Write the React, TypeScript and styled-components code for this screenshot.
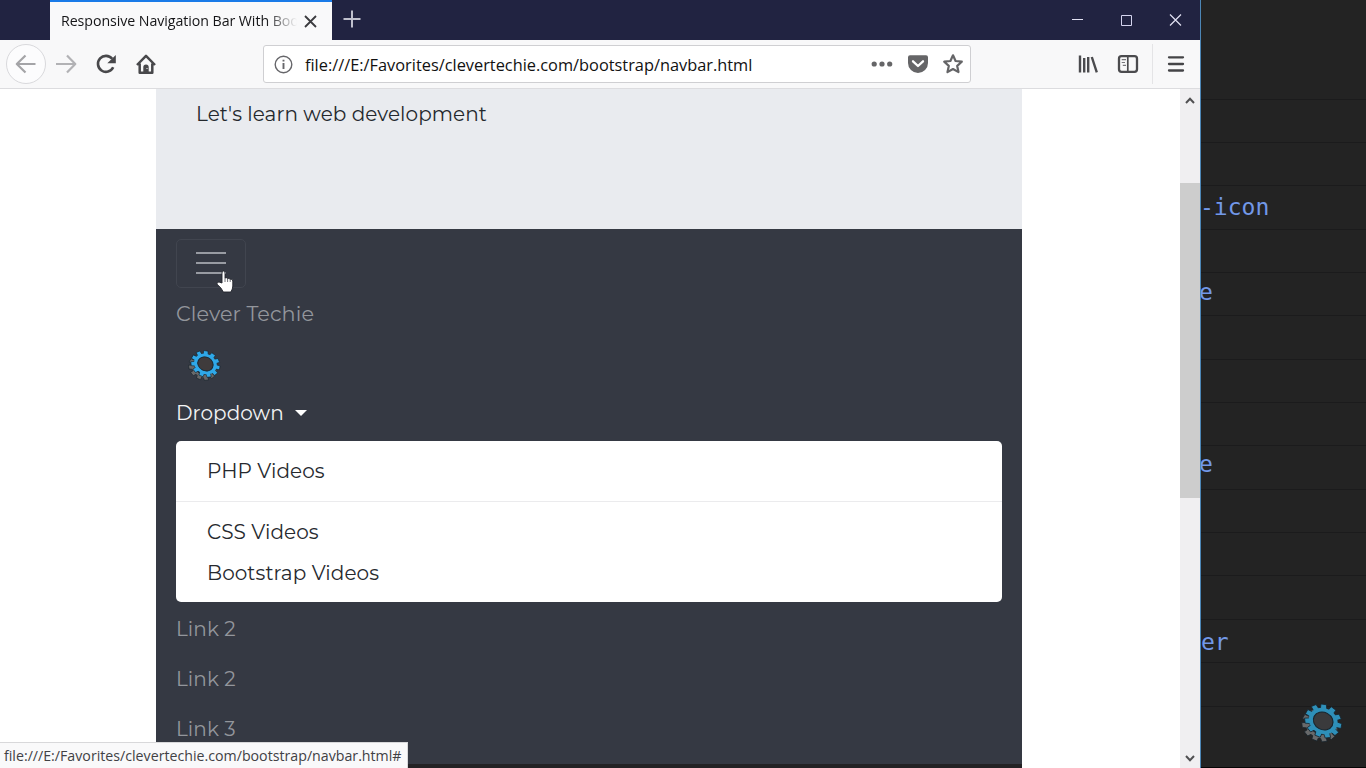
import React from 'react';
import styled, { createGlobalStyle } from 'styled-components';

const GlobalStyle = createGlobalStyle`
  * { box-sizing: border-box; }
  html, body { margin: 0; padding: 0; overflow: hidden; background: #232323; }
`;

const uiFont = '"Open Sans", "Noto Sans", sans-serif';
const pageFont = 'Montserrat, Inter, sans-serif';

const Desktop = styled.div`
  display: flex;
  width: 1366px;
  height: 768px;
  overflow: hidden;
`;

const BrowserWindow = styled.section`
  position: relative;
  display: flex;
  flex-direction: column;
  flex: none;
  width: 1201px;
  border-right: 1px solid #4c86b6;
  background: #fff;
`;

const TitleBar = styled.header`
  display: flex;
  height: 40px;
  padding-left: 50px;
  background: #212341;
`;

const Tab = styled.div`
  display: flex;
  align-items: center;
  width: 282px;
  padding: 0 0 0 11px;
  border-top: 2px solid #1a7be8;
  background: #f9f9fa;
`;

const TabTitle = styled.div`
  width: 238px;
  overflow: hidden;
  white-space: nowrap;
  font: 14.2px/20px ${uiFont};
  letter-spacing: -0.06px;
  color: #151517;
  mask-image: linear-gradient(to right, #000 205px, transparent 236px);
`;

const TabClose = styled.svg`
  width: 13px;
  height: 13px;
  margin-left: 5px;
`;

const NewTab = styled.svg`
  width: 18px;
  height: 18px;
  margin: 10px 0 0 11px;
`;

const WindowControls = styled.div`
  display: flex;
  margin-left: auto;
`;

const WindowControl = styled.svg`
  width: 49px;
  height: 40px;
`;

const Toolbar = styled.div`
  display: flex;
  align-items: center;
  flex: none;
  height: 49px;
  border-bottom: 1px solid #dcdcdf;
  background: #f8f8f9;
`;

const BackButton = styled.div`
  display: flex;
  align-items: center;
  justify-content: center;
  width: 40px;
  height: 40px;
  margin: 0 10px 0 6px;
  border: 1px solid #d9d9dc;
  border-radius: 50%;
  background: #fcfcfd;
`;

const ToolIcon = styled.svg<{ $gap?: number; $size?: number }>`
  flex: none;
  width: ${({ $size = 22 }) => $size}px;
  height: ${({ $size = 22 }) => $size}px;
  margin-left: ${({ $gap = 0 }) => $gap}px;
`;

const StarIcon = styled(ToolIcon)`
  margin-right: 6px;
`;

const AddressBar = styled.div`
  display: flex;
  align-items: center;
  width: 708px;
  height: 38px;
  margin-left: 106px;
  border: 1px solid #cfcfd2;
  border-radius: 3px;
  background: #fff;
`;

const Url = styled.div`
  flex: 1;
  padding-top: 2px;
  margin-left: 12px;
  white-space: nowrap;
  font: 16.35px/24px ${uiFont};
  color: #111;
`;

const ToolbarDivider = styled.div`
  width: 1px;
  height: 40px;
  margin: 0 12px 0 13px;
  background: #e4e4e6;
`;

const Viewport = styled.div`
  display: flex;
  flex: 1;
  min-height: 0;
`;

const Document = styled.main`
  display: flex;
  flex-direction: column;
  width: 866px;
  margin: 0 158px 0 156px;
  font-family: ${pageFont};
  font-size: 20px;
  line-height: 30px;
`;

const Line = styled.span`
  white-space: nowrap;
  letter-spacing: 0.07px;
`;

const Jumbotron = styled.div`
  height: 140px;
  padding: 10px 40px;
  background: #e9ebef;
  color: #24282d;
`;

const Navbar = styled.nav`
  display: flex;
  flex-direction: column;
  height: 535px;
  padding: 10px 20px 0;
  background: #353943;
`;

const Toggler = styled.div`
  display: flex;
  flex-direction: column;
  justify-content: center;
  align-items: center;
  gap: 8px;
  width: 70px;
  height: 49px;
  padding-bottom: 1px;
  border: 1px solid #41454f;
  border-radius: 5px;
`;

const TogglerBar = styled.span`
  width: 30px;
  height: 2px;
  background: #989ba2;
`;

const NavLink = styled.a`
  display: flex;
  align-items: center;
  height: 50px;
  padding-top: 1px;
  color: #93969c;
`;

const Brand = styled(NavLink)`
  padding-top: 2px;
  font-size: 20.8px;
`;

const DropdownToggle = styled(NavLink)`
  height: 46px;
  padding: 0 0 4px;
  color: #f3f4f5;
`;

const LogoRow = styled.div`
  display: flex;
  align-items: center;
  height: 54px;
  padding-left: 12px;
`;

const Caret = styled.span`
  margin-left: 11px;
  border: 6px solid transparent;
  border-top-color: #fff;
  border-bottom: 0;
`;

const Menu = styled.div`
  height: 161px;
  margin: 3px 0 1px;
  padding: 10px 0;
  border-radius: 5px;
  background: #fff;
  color: #26292e;
`;

const MenuItem = styled.div`
  height: 41px;
  padding: 5px 31px;
`;

const MenuDivider = styled.div`
  height: 1px;
  margin: 9px 0 10px;
  background: #ebebed;
`;

const PageFooter = styled.div`
  flex: 1;
  background: #232224;
`;

const Scrollbar = styled.div`
  display: flex;
  flex-direction: column;
  align-items: center;
  width: 20px;
  background: #f0eff1;
`;

const ScrollArrow = styled.svg`
  width: 20px;
  height: 20px;
`;

const ScrollThumb = styled.div`
  width: 20px;
  height: 315px;
  margin: 74px 0 auto;
  background: #cdcdcd;
`;

const StatusPanel = styled.div`
  position: absolute;
  left: 0;
  bottom: 0;
  width: 408px;
  height: 26px;
  padding-left: 4px;
  border-top: 1px solid #d8d8da;
  border-right: 1px solid #d8d8da;
  background: #f9f9fa;
  white-space: nowrap;
  font: 14.2px/26px ${uiFont};
  color: #414145;
`;

const Pointer = styled.svg`
  position: absolute;
  left: 216px;
  top: 270px;
  width: 18px;
  height: 23px;
`;

const Editor = styled.aside`
  position: relative;
  flex: 1;
  overflow: hidden;
  border-bottom: 1px solid #050505;
  background: #232323;
`;

const EditorRow = styled.div<{ $first?: boolean; $lineHeight: number; $indent: number }>`
  height: ${({ $first }) => ($first ? 99.5 : 43.36)}px;
  border-bottom: 1px solid #1b1b1c;
  font: 23px/42px "DejaVu Sans Mono", monospace;
  line-height: ${({ $lineHeight }) => $lineHeight}px;
  text-indent: ${({ $indent }) => $indent}px;
  color: #7298e8;
  &:nth-last-child(2) { border-bottom: 0; }
`;

const Watermark = styled.div`
  position: absolute;
  left: 100px;
  top: 702px;
`;

const toothAngles = Array.from({ length: 11 }, (_, i) => (i * 360) / 11 + 10);

function GearShape({ fill, hole }: { fill: string; hole: string }) {
  return (
    <g stroke="#18242c" strokeWidth="0.8">
      {toothAngles.map((angle) => (
        <path key={angle} d="M-3.1 -12 L-2.7 -18 H2.7 L3.1 -12Z" fill={fill} transform={`rotate(${angle})`} />
      ))}
      <circle r="14" fill={fill} stroke="none" />
      <circle r="9.6" fill={hole} strokeWidth="1.1" />
    </g>
  );
}

function Gear({ size, color, hole }: { size: number; color: string; hole: string }) {
  return (
    <svg width={size} height={size} viewBox="0 0 42 42">
      <g transform="translate(18.8 23.5) rotate(28) scale(1.03 .86)">
        <GearShape fill="#68696a" hole="#303032" />
      </g>
      <g transform="translate(22.2 19) rotate(28) scale(1.06 .9)">
        <GearShape fill={color} hole={hole} />
      </g>
    </svg>
  );
}

type CodeRow = { text: string; lineHeight?: number; indent?: number };

const blank: CodeRow = { text: '' };
const editorRows: CodeRow[] = [
  blank, blank, blank,
  { text: '-icon', indent: -1 },
  blank,
  { text: 'e', lineHeight: 39, indent: -2 },
  blank, blank, blank,
  { text: 'e', lineHeight: 37, indent: -2 },
  blank, blank, blank,
  { text: 'er', lineHeight: 45 },
  blank, blank,
];

export default function App() {
  return (
    <Desktop>
      <GlobalStyle />
      <BrowserWindow>
        <TitleBar>
          <Tab>
            <TabTitle>Responsive Navigation Bar With Boo</TabTitle>
            <TabClose viewBox="0 0 13 13"><path d="M1 1 12 12M12 1 1 12" stroke="#3b3b3f" strokeWidth="1.8" /></TabClose>
          </Tab>
          <NewTab viewBox="0 0 18 18"><path d="M9 .5V17.5M.5 9H17.5" stroke="#bfc0cd" strokeWidth="2" /></NewTab>
          <WindowControls>
            <WindowControl viewBox="0 0 49 40"><path d="M19 19.5H30" stroke="#e1e1f2" /></WindowControl>
            <WindowControl viewBox="0 0 49 40"><path d="M19.5 15.5H29.5V25.5H19.5Z" fill="none" stroke="#d4d4ee" /></WindowControl>
            <WindowControl viewBox="0 0 49 40"><path d="M19 14.5 30 25.5M30 14.5 19 25.5" stroke="#e1e1f2" strokeWidth="1.2" /></WindowControl>
          </WindowControls>
        </TitleBar>
        <Toolbar>
          <BackButton>
            <ToolIcon viewBox="0 0 22 22"><path d="M20.5 11H2M10.5 2.5 1.8 11 10.5 19.5" fill="none" stroke="#a4a4a7" strokeWidth="2.2" strokeLinejoin="round" /></ToolIcon>
          </BackButton>
          <ToolIcon viewBox="0 0 22 22"><path d="M0 11H19M11 2.5 19.3 11 11 19.5" fill="none" stroke="#b2b2b5" strokeWidth="2.2" strokeLinejoin="round" /></ToolIcon>
          <ToolIcon $gap={17} viewBox="0 0 22 22">
            <path d="M17.2 5.8A8 8 0 1 0 18.2 14.3" fill="none" stroke="#48484b" strokeWidth="2.6" />
            <path d="M20.8 2V10.2H12.3Z" fill="#48484b" />
          </ToolIcon>
          <ToolIcon $gap={18} viewBox="0 0 22 22">
            <path d="M2 12 11 2.8 20 12M4.7 10.5V19.7H17.3V10.5" fill="none" stroke="#48484b" strokeWidth="2.5" strokeLinejoin="round" />
            <path d="M8.3 20V14Q8.3 11.5 11 11.5T13.7 14V20Z" fill="#48484b" />
            <path d="M11.5 15.5h1" stroke="#f8f8f9" />
          </ToolIcon>
          <AddressBar>
            <ToolIcon $gap={10} $size={19} viewBox="0 0 19 19">
              <circle cx="9.5" cy="9.5" r="8.3" fill="none" stroke="#66666a" strokeWidth="1.4" />
              <path d="M9.5 8V14M9.5 4.7V6.5" stroke="#66666a" strokeWidth="1.9" />
            </ToolIcon>
            <Url>file:///E:/Favorites/clevertechie.com/bootstrap/navbar.html</Url>
            <ToolIcon viewBox="0 0 22 22">
              {[3.2, 11, 18.7].map((cx) => <circle key={cx} cx={cx} cy="11" r="2.6" fill="#656567" />)}
            </ToolIcon>
            <ToolIcon $gap={14} viewBox="0 0 22 22">
              <path d="M3 2.2H19A2 2 0 0 1 21 4.2V10A10 10 0 0 1 1 10V4.2A2 2 0 0 1 3 2.2Z" fill="#656567" />
              <path d="M6 8.3 11 13 16 8.3" fill="none" stroke="#fff" strokeWidth="2.3" strokeLinecap="round" strokeLinejoin="round" />
            </ToolIcon>
            <StarIcon $gap={13} viewBox="0 0 22 22">
              <path d="M11 2.3 13.6 8 19.8 8.7 15.2 12.9 16.5 19.1 11 16 5.5 19.1 6.8 12.9 2.2 8.7 8.4 8Z" fill="none" stroke="#656567" strokeWidth="2.2" strokeLinejoin="round" />
            </StarIcon>
          </AddressBar>
          <ToolIcon $gap={106} viewBox="0 0 22 22">
            <path d="M3 2.5V19.5M7.2 5V19.5M11.2 4V19.5M14.8 4 19.8 19.4" fill="none" stroke="#4b4b4e" strokeWidth="2.4" />
          </ToolIcon>
          <ToolIcon $gap={18} viewBox="0 0 22 22">
            <rect x="2" y="3.2" width="18" height="15.6" rx="2.5" fill="none" stroke="#4b4b4e" strokeWidth="2.3" />
            <path d="M10.8 3V19" stroke="#4b4b4e" strokeWidth="1.7" />
            <path d="M4.7 6.7H9M4.7 9.5H8M5.8 12.3H9" stroke="#77777b" strokeWidth="1.2" />
          </ToolIcon>
          <ToolbarDivider />
          <ToolIcon viewBox="0 0 22 22"><path d="M4 4.3H18M4 11H18M4 17.5H18" stroke="#444447" strokeWidth="2.3" strokeLinecap="round" /></ToolIcon>
        </Toolbar>
        <Viewport>
          <Document>
            <Jumbotron><Line>Let's learn web development</Line></Jumbotron>
            <Navbar>
              <Toggler><TogglerBar /><TogglerBar /><TogglerBar /></Toggler>
              <Brand><Line>Clever Techie</Line></Brand>
              <LogoRow><Gear size={33} color="#2fa8e8" hole="#3f3b3c" /></LogoRow>
              <DropdownToggle><Line>Dropdown</Line><Caret /></DropdownToggle>
              <Menu>
                <MenuItem><Line>PHP Videos</Line></MenuItem>
                <MenuDivider />
                <MenuItem><Line>CSS Videos</Line></MenuItem>
                <MenuItem><Line>Bootstrap Videos</Line></MenuItem>
              </Menu>
              <NavLink><Line>Link 2</Line></NavLink>
              <NavLink><Line>Link 2</Line></NavLink>
              <NavLink><Line>Link 3</Line></NavLink>
            </Navbar>
            <PageFooter />
          </Document>
          <Scrollbar>
            <ScrollArrow viewBox="0 0 20 20"><path d="M6 14 10 9.8 14 14" fill="none" stroke="#505052" strokeWidth="2" /></ScrollArrow>
            <ScrollThumb />
            <ScrollArrow viewBox="0 0 20 20"><path d="M6 8 10 12.2 14 8" fill="none" stroke="#505052" strokeWidth="2" /></ScrollArrow>
          </Scrollbar>
        </Viewport>
        <StatusPanel>file:///E:/Favorites/clevertechie.com/bootstrap/navbar.html#</StatusPanel>
        <Pointer viewBox="0 0 18 23">
          <path d="M6 13V3Q6 1 7.5 1T9 3V8Q10.5 7 11.5 8.7Q13 7.7 14 9.3Q16.5 8.5 16.8 11V16Q16.8 19 14.8 22H7.3Q5.8 18 1 14.2Q.4 12 3 12Z" fill="#fff" stroke="#20232a" strokeWidth=".9" />
          <path d="M9 8V12M11.6 9V12M14.2 10V12" stroke="#4b4d54" strokeWidth=".8" />
        </Pointer>
      </BrowserWindow>
      <Editor>
        {editorRows.map(({ text, lineHeight = 42, indent = 0 }, index) => (
          <EditorRow key={index} $first={index === 0} $lineHeight={lineHeight} $indent={indent}>{text}</EditorRow>
        ))}
        <Watermark><Gear size={42} color="#2e8fb8" hole="#3a3a3c" /></Watermark>
      </Editor>
    </Desktop>
  );
}
